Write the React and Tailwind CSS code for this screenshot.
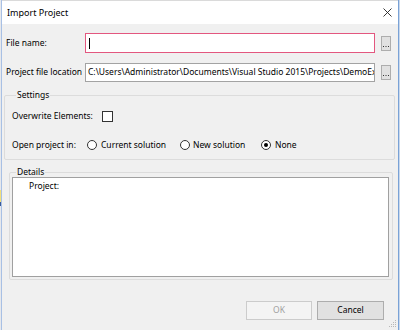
import React from "react";

function Radio({ checked }) {
  return (
    <span className="w-[10px] h-[10px] rounded-full border border-[#333333] bg-white flex items-center justify-center shrink-0">
      {checked ? <span className="w-[4px] h-[4px] rounded-full bg-black" /> : null}
    </span>
  );
}

function Dots() {
  return (
    <div className="w-[10px] h-[15px] border border-[#adadad] bg-[#e1e1e1] flex items-end justify-center pb-[3px] ml-[6px]">
      <svg width="6" height="1" viewBox="0 0 6 1">
        <rect x="0" y="0" width="1" height="1" fill="#333" />
        <rect x="2.5" y="0" width="1" height="1" fill="#333" />
        <rect x="5" y="0" width="1" height="1" fill="#333" />
      </svg>
    </div>
  );
}

export default function App() {
  return (
    <div
      className="w-[400px] h-[330px] flex overflow-hidden relative text-[8.5px] text-black"
      style={{ fontFamily: '"Noto Sans", "Liberation Sans", sans-serif' }}
    >
      <div className="w-[1px] bg-[#e6e8ec] flex flex-col">
        <div className="h-[190px]" />
        <div className="h-[12px] bg-[#f3e07a]" />
        <div className="h-[4px] bg-[#3a5a9a]" />
      </div>
      <div className="w-[1px] bg-[#a8c0e4]" />
      <div className="flex-1 flex flex-col bg-[#f0f0f0]">
        <div className="h-[24px] bg-white flex items-center justify-between pl-[5px] pr-[6px] border-t border-[#dadada]">
          <span className="text-[9px]">Import Project</span>
          <svg width="9" height="9" viewBox="0 0 9 9">
            <path d="M0.5 0.5 L8.5 8.5 M8.5 0.5 L0.5 8.5" stroke="#222" strokeWidth="0.9" />
          </svg>
        </div>
        <div className="flex flex-col">
          <div className="flex items-center mt-[9px] pl-[4px]">
            <span className="w-[79px]">File name:</span>
            <div className="w-[290px] h-[20px] border border-[#e3577f] bg-white flex items-center pl-[3px]">
              <span className="w-[1px] h-[11px] bg-black" />
            </div>
            <Dots />
          </div>
          <div className="flex items-center mt-[10px] pl-[4px]">
            <span className="w-[79px] whitespace-nowrap">Project file location</span>
            <div className="w-[290px] h-[19px] border border-[#a3a3a3] bg-white flex items-center pl-[2px] overflow-hidden whitespace-nowrap">
              C:\Users\Administrator\Documents\Visual Studio 2015\Projects\DemoExp
            </div>
            <Dots />
          </div>
          <fieldset className="mt-[7px] ml-[2px] mr-[3px] border border-[#dcdcdc] rounded-[2px] pl-[7px] pb-[8px]">
            <legend className="ml-[4px] px-[1px] leading-[12px]">Settings</legend>
            <div className="flex items-center mt-[9px] h-[12px]">
              <span className="w-[90px]">Overwrite Elements:</span>
              <span className="w-[11px] h-[11px] border border-[#333333] bg-white" />
            </div>
            <div className="flex items-center mt-[17px] h-[12px]">
              <span className="w-[75px]">Open project in:</span>
              <div className="w-[93px] flex items-center gap-[4px]">
                <Radio />
                <span>Current solution</span>
              </div>
              <div className="w-[81px] flex items-center gap-[3px]">
                <Radio />
                <span>New solution</span>
              </div>
              <div className="flex items-center gap-[4px]">
                <Radio checked />
                <span>None</span>
              </div>
            </div>
          </fieldset>
          <fieldset className="mt-[6px] ml-[7px] mr-[5px] border border-[#dcdcdc] rounded-[2px] pl-[2px] pr-[3px] pb-[2px]">
            <legend className="ml-[4px] px-[1px] leading-[12px]">Details</legend>
            <div className="h-[100px] -mt-[1px] bg-white border border-[#a0a0a0] pl-[16px] pt-[2px]">
              Project:
            </div>
          </fieldset>
          <div className="flex justify-end gap-[5px] pr-[14px] mt-[21px]">
            <div className="w-[66px] h-[19px] border border-[#cccccc] bg-[#f4f4f4] text-[#a0a0a0] flex items-center justify-center">
              OK
            </div>
            <div className="w-[67px] h-[19px] border border-[#adadad] bg-[#e1e1e1] flex items-center justify-center">
              Cancel
            </div>
          </div>
        </div>
      </div>
      <div className="w-[1px] bg-[#7aa2d6]" />
      <div className="w-[1px] bg-[#c9d8ec]" />
      <svg className="absolute right-[3px] bottom-[2px]" width="8" height="8" viewBox="0 0 8 8">
        <g fill="#b8b8b8">
          <rect x="6" y="0" width="1" height="1" />
          <rect x="4" y="2" width="1" height="1" />
          <rect x="6" y="2" width="1" height="1" />
          <rect x="2" y="4" width="1" height="1" />
          <rect x="4" y="4" width="1" height="1" />
          <rect x="6" y="4" width="1" height="1" />
          <rect x="0" y="6" width="1" height="1" />
          <rect x="2" y="6" width="1" height="1" />
          <rect x="4" y="6" width="1" height="1" />
          <rect x="6" y="6" width="1" height="1" />
        </g>
      </svg>
    </div>
  );
}
